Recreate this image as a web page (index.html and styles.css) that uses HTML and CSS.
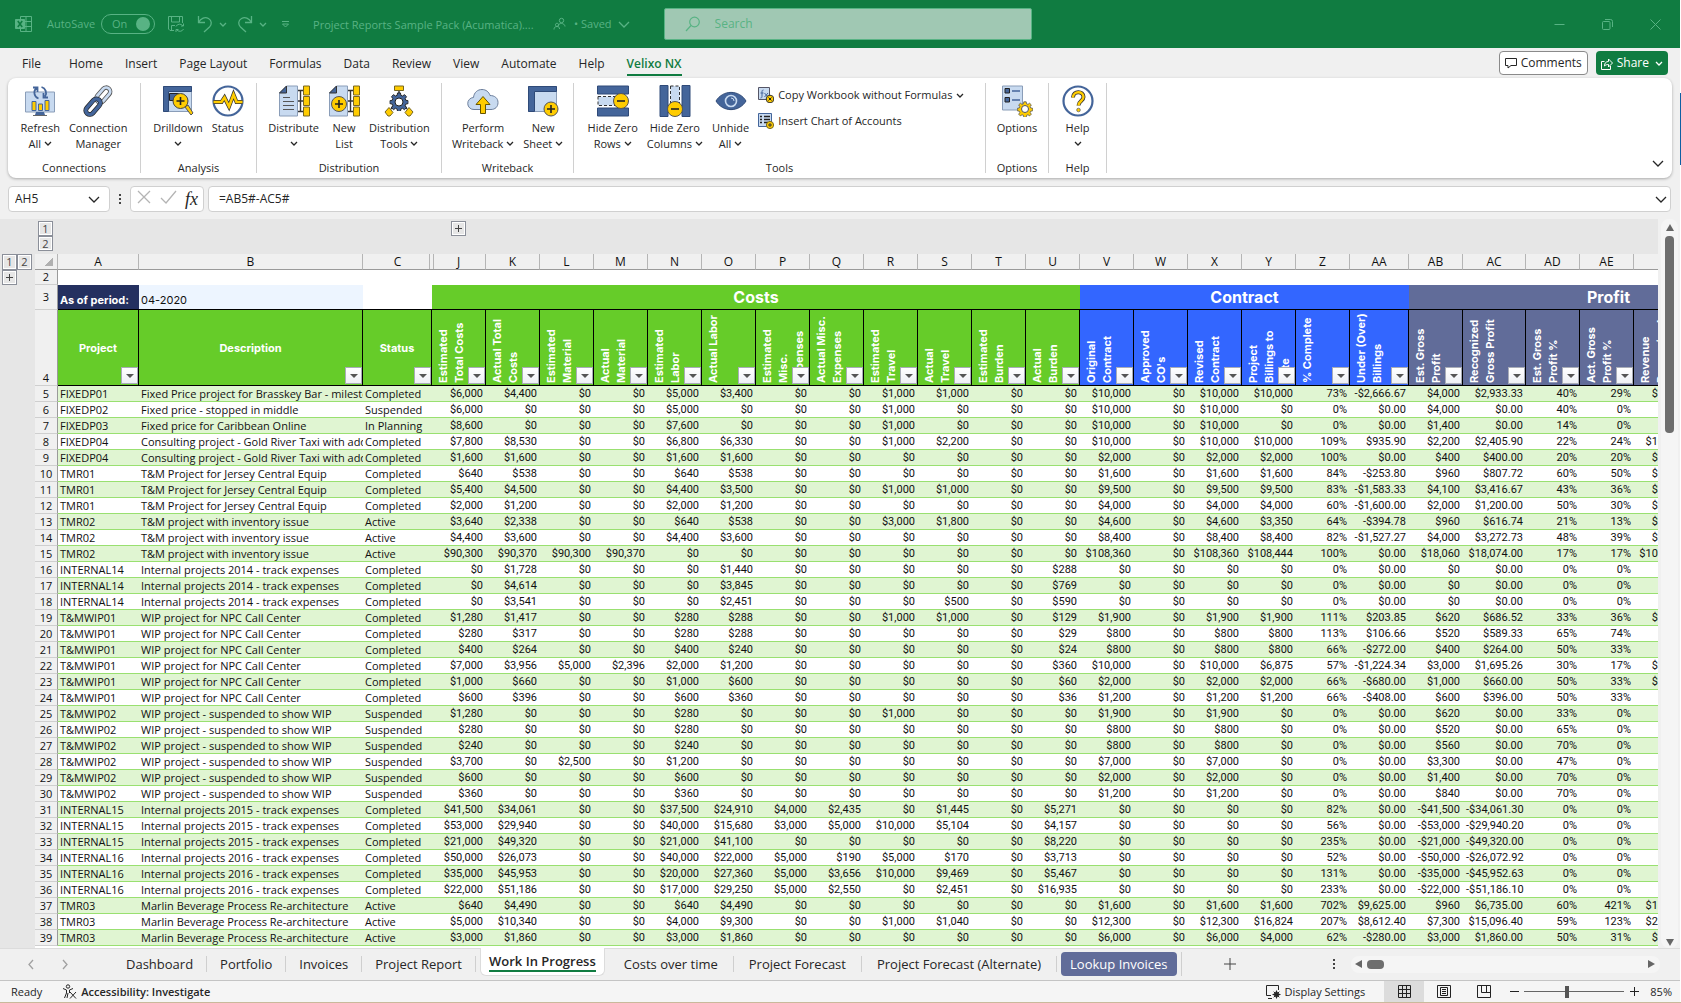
FILE: index.html
```html
<!DOCTYPE html>
<html lang="en">
<head>
    <meta charset="UTF-8">
    <meta name="viewport" content="width=device-width, initial-scale=1.0">
    <title>Project Reports Sample Pack (Acumatica)</title>
    <link rel="stylesheet" href="styles.css">
</head>
<body>

    <!-- shared shapes -->
    <svg class="sprite" aria-hidden="true">
        <symbol id="chev" viewBox="0 0 8 5"><path d="M1 1l3 3 3-3" fill="none" stroke="currentColor" stroke-width="1.3"/></symbol>
        <symbol id="chev-big" viewBox="0 0 12 7"><path d="M1 1l5 5 5-5" fill="none" stroke="currentColor" stroke-width="1.3"/></symbol>
        <symbol id="gear" viewBox="0 0 20 20"><path d="M8.500 1h3l.5 2.500 1.700.7 2.100-1.400 2.100 2.100-1.400 2.100.7 1.700 2.500.5v3l-2.500.5-.7 1.700 1.400 2.100-2.100 2.100-2.100-1.400-1.700.7-.5 2.500h-3l-.5-2.500-1.700-.7-2.100 1.400-2.100-2.100 1.400-2.100-.7-1.700L.3 12.200v-3l2.500-.5.7-1.700-1.400-2.100 2.100-2.100 2.100 1.400 1.700-.7z"/></symbol>
    </svg>

    <header class="titlebar">
        <svg class="excel" width="18" height="18" viewBox="0 0 18 18" fill="none" stroke="currentColor"><path d="M5.500 4V1.500h11v15h-11V14M11 1.500v15M5.500 6.500h11M5.500 11.500h11"/><path d="M.5 4.500h9v9h-9z" fill="currentColor"/><path d="M2.800 6l4.400 6M7.200 6l-4.400 6" stroke="#107c41" stroke-width="1.600"/></svg>
        <label class="autosave" for="autosave">AutoSave</label>
        <span class="toggle">
            <span>On</span>
            <input type="checkbox" id="autosave" checked>
        </span>
        <button class="tb save" aria-label="Save"><svg width="18" height="18" viewBox="0 0 18 18" fill="none" stroke="currentColor"><path d="M7 15.500H3L1.500 14V1.500h14V8M4.500 1.500V7h8V1.500M4.500 15.500V10.500H8"/><path d="M9 11.500a4 4 0 0 1 7-.5M16.500 8.500V11H14M16.500 14a4 4 0 0 1-7 .5M9 17v-2.500h2.500"/></svg></button>
        <button class="tb undo" aria-label="Undo"><svg width="16" height="18" viewBox="0 0 16 18" fill="none" stroke="currentColor" stroke-width="1.300"><path d="M1.500 1v6.500H8M1.500 7.500C4 3 8 1.500 11.500 3.500s3.500 6 1 8.500L7 17"/></svg><svg class="chev"><use href="#chev"/></svg></button>
        <button class="tb redo" aria-label="Redo"><svg width="16" height="18" viewBox="0 0 16 18" fill="none" stroke="currentColor" stroke-width="1.300"><path d="M14.500 1v6.500H8M14.500 7.500C12 3 8 1.500 4.500 3.500s-3.500 6-1 8.500L9 17"/></svg><svg class="chev"><use href="#chev"/></svg></button>
        <button class="tb custom" aria-label="Customize toolbar"><svg width="9" height="8" viewBox="0 0 9 8" fill="none" stroke="currentColor"><path d="M1 1.500h7M1.500 4l3 3 3-3z"/></svg></button>
        <span class="doc">Project Reports Sample Pack (Acumatica)....</span>
        <svg class="people" width="13" height="14" viewBox="0 0 13 14" fill="none" stroke="currentColor"><circle cx="8.500" cy="3.500" r="2.200"/><path d="M5 9.500C5 7 7 6.500 8.500 6.500S12 7.500 12 9.500M4 6.200a1.600 1.600 0 1 0 .1 0M1 12.500c0-2 1-3 3-3s2.500 1 2.500 2.500"/></svg>
        <button class="tb saved">• Saved <svg class="chev-big"><use href="#chev-big"/></svg></button>
        <label class="search">
            <svg width="16" height="16" viewBox="0 0 16 16" fill="none" stroke="currentColor" stroke-width="1.200"><circle cx="9.500" cy="6" r="4.800"/><path d="M6 9.500L1 15"/></svg>
            <input type="search" placeholder="Search" aria-label="Search">
        </label>
        <div class="window">
            <button aria-label="Minimize"><svg width="11" height="11" viewBox="0 0 11 11" stroke="currentColor"><path d="M.5 5.500h10"/></svg></button>
            <button aria-label="Restore"><svg width="11" height="11" viewBox="0 0 11 11" fill="none" stroke="currentColor"><rect x=".5" y="2.500" width="7.500" height="8" rx="1"/><path d="M3 .5h5.500a2 2 0 0 1 2 2V8"/></svg></button>
            <button aria-label="Close"><svg width="11" height="11" viewBox="0 0 11 11" stroke="currentColor"><path d="M.5.5l10 10M10.500.5l-10 10"/></svg></button>
        </div>
    </header>

    <nav class="tabs">
        <a href="#">File</a>
        <a href="#">Home</a>
        <a href="#">Insert</a>
        <a href="#">Page Layout</a>
        <a href="#">Formulas</a>
        <a href="#">Data</a>
        <a href="#">Review</a>
        <a href="#">View</a>
        <a href="#">Automate</a>
        <a href="#">Help</a>
        <a href="#" class="active">Velixo NX</a>
        <button class="comments"><svg width="12" height="12" viewBox="0 0 12 12" fill="none" stroke="currentColor"><path d="M.5 1.500h11v7H6L3 11V8.500H.5z"/></svg>Comments</button>
        <button class="share"><svg width="12" height="13" viewBox="0 0 12 13" fill="none" stroke="currentColor"><path d="M3.500 4.500h-3v8h9V9"/><path d="M3.500 9c0-3 1.500-4.500 4-4.500V2l4 4-4 4V7.500C5.500 7.500 4.500 8 3.500 9z"/></svg>Share<svg class="chev"><use href="#chev"/></svg></button>
    </nav>

    <section class="ribbon">
        <div class="group">
            <div class="tools">
                <button><svg class="ico" viewBox="0 0 32 32"><path d="M1.500 7h29v20h-29z" fill="#c8daf0" stroke="#8a9db8"/><path d="M12 27h8l1 3H11z" fill="#44659a"/><path d="M9 30.500h14" stroke="#666"/><path d="M8 16.500h4v9H8zM14.500 19h4v6.500h-4zM21 15.500h4v10h-4z" fill="#fc0" stroke="#44659a"/><path d="M14.500 13.500a6.200 6.200 0 0 1-2-10.500M9 2.500h4.500V7M17.500 2a6.200 6.200 0 0 1 3.500 9.500M24 12.500h-4.500V8" fill="none" stroke="#44659a" stroke-width="1.800"/></svg>Refresh<br>All <svg class="chev"><use href="#chev"/></svg></button>
                <button><svg class="ico" viewBox="0 0 32 32"><g transform="rotate(-49 16 16)" fill="none"><rect x="15.500" y="12" width="17" height="8" rx="4" stroke="#555" stroke-width="4.400"/><rect x="15.500" y="12" width="17" height="8" rx="4" stroke="#c8daf0" stroke-width="2.800"/><rect x="-.5" y="12" width="18" height="8" rx="4" stroke="#222" stroke-width="4.800"/><rect x="-.5" y="12" width="18" height="8" rx="4" stroke="#44659a" stroke-width="3.400"/></g></svg>Connection<br>Manager</button>
            </div>
            <div class="caption">Connections</div>
        </div>
        <div class="group">
            <div class="tools">
                <button><svg class="ico" viewBox="0 0 32 32"><path d="M1.500 1.500h28v25h-28z" fill="#c8daf0" stroke="#8a9db8"/><path d="M1.500 1.500h28v5h-23v20h-5z" fill="#44659a" stroke="#2f4a78"/><path d="M7.500 8.500h9v7h-9z" fill="#44659a" stroke="#222"/><path d="M23 22l6 8 2-2-5-8z" fill="#fc0" stroke="#555"/><circle cx="18.500" cy="16" r="7.500" fill="#fc0" stroke="#444"/><path d="M18.500 12v8M14.500 16h8" stroke="#222" stroke-width="1.600"/></svg>Drilldown<br><svg class="chev"><use href="#chev"/></svg></button>
                <button><svg class="ico" viewBox="0 0 32 32"><circle cx="16" cy="16" r="14.500" fill="#fff" stroke="#44659a" stroke-width="2.200"/><path d="M1.500 17h8l3-4.500 4.500 9 4.500-12 3 7.500h6" fill="none" stroke="#333" stroke-width="4"/><path d="M1.500 17h8l3-4.500 4.500 9 4.500-12 3 7.500h6" fill="none" stroke="#fc0" stroke-width="2.600"/></svg>Status<br>&nbsp;</button>
            </div>
            <div class="caption">Analysis</div>
        </div>
        <div class="group">
            <div class="tools">
                <button><svg class="ico" viewBox="0 0 32 32"><path d="M1.500 8l7-7h11v30h-18z" fill="#c8daf0" stroke="#8a9db8"/><path d="M1.500 8l7-7v7z" fill="#44659a" stroke="#333"/><path d="M5 12.500h7M5 16.500h11M5 20.500h11M5 24.500h11" stroke="#555"/><path d="M20 5.500h6M20 16h6M20 26.500h6M22.500 5.500v21" stroke="#333" stroke-width="1.400"/><path d="M25.500 1h6v9h-6zM25.500 11.500h6v9h-6zM25.500 22h6v9h-6z" fill="#fc0" stroke="#776620"/></svg>Distribute<br><svg class="chev"><use href="#chev"/></svg></button>
                <button><svg class="ico" viewBox="0 0 32 32"><path d="M1.500 8l7-7h11v30h-18z" fill="#c8daf0" stroke="#8a9db8"/><path d="M1.500 8l7-7v7z" fill="#44659a" stroke="#333"/><path d="M20 5.500h6M20 16h6M20 26.500h6M22.500 5.500v21" stroke="#333" stroke-width="1.400"/><path d="M25.500 1h6v9h-6zM25.500 11.500h6v9h-6zM25.500 22h6v9h-6z" fill="#fc0" stroke="#776620"/><circle cx="11" cy="19" r="7.500" fill="#fc0" stroke="#555"/><path d="M11 15v8M7 19h8" stroke="#222" stroke-width="1.600"/></svg>New<br>List</button>
                <button><svg class="ico" viewBox="0 0 32 32"><path d="M16 5v6M8 24l3-4M24 24l-3-4" stroke="#333" stroke-width="1.400"/><path d="M11.500 1h9v4.500h-9z" fill="#fc0" stroke="#776620"/><use href="#gear" x="6.500" y="7" width="19" height="19" fill="#44659a" stroke="#222"/><circle cx="16" cy="17" r="4" fill="#fff" stroke="#222"/><path d="M6 22.500l4 5-3 3.500H5l-3-4zM26 22.500l-4 5 3 3.500h2l3-4z" fill="#fc0" stroke="#776620"/></svg>Distribution<br>Tools <svg class="chev"><use href="#chev"/></svg></button>
            </div>
            <div class="caption">Distribution</div>
        </div>
        <div class="group">
            <div class="tools">
                <button><svg class="ico" viewBox="0 0 32 32"><path d="M7 24.500a6 6 0 0 1-.5-12c.5-5 4-8 8.500-8 4 0 7 2.500 8 6 4.500 0 8 2.500 8 7s-3 7-7 7z" fill="#c8daf0" stroke="#6d7f9c"/><path d="M16 11.500l7 8h-4.500v9h-5v-9H9z" fill="#fc0" stroke="#665500"/></svg>Perform<br>Writeback <svg class="chev"><use href="#chev"/></svg></button>
                <button><svg class="ico" viewBox="0 0 32 32"><path d="M1.500 1.500h28v25h-28z" fill="#c8daf0" stroke="#8a9db8"/><path d="M1.500 1.500h28v5h-22v20h-6z" fill="#44659a" stroke="#2f4a78"/><circle cx="24" cy="24" r="7" fill="#fc0" stroke="#555"/><path d="M24 20v8M20 24h8" stroke="#222" stroke-width="1.600"/></svg>New<br>Sheet <svg class="chev"><use href="#chev"/></svg></button>
            </div>
            <div class="caption">Writeback</div>
        </div>
        <div class="group">
            <div class="tools">
                <button><svg class="ico" viewBox="0 0 32 32"><path d="M.5 1h31v8h-31zM.5 23h31v8h-31z" fill="#44659a" stroke="#2f4a78"/><path d="M1 11.500h20v9H1z" fill="#c8daf0" stroke="#333" stroke-dasharray="3 2"/><circle cx="24" cy="16" r="7.500" fill="#fc0" stroke="#555"/><path d="M20 16h8" stroke="#222" stroke-width="1.600"/></svg>Hide Zero<br>Rows <svg class="chev"><use href="#chev"/></svg></button>
                <button><svg class="ico" viewBox="0 0 32 32"><path d="M1 .5h8v31H1zM23 .5h8v31h-8z" fill="#44659a" stroke="#2f4a78"/><path d="M11.500 1h9v20h-9z" fill="#c8daf0" stroke="#333" stroke-dasharray="3 2"/><circle cx="16" cy="24" r="7.500" fill="#fc0" stroke="#555"/><path d="M12 24h8" stroke="#222" stroke-width="1.600"/></svg>Hide Zero<br>Columns <svg class="chev"><use href="#chev"/></svg></button>
                <button><svg class="ico" viewBox="0 0 32 32"><path d="M1 16C8 4.500 24 4.500 31 16 24 27.500 8 27.500 1 16z" fill="#44659a" stroke="#2f4a78"/><circle cx="16" cy="16" r="5.500" fill="none" stroke="#c8daf0" stroke-width="1.600"/><path d="M16 13a3 3 0 0 1 3 3" fill="none" stroke="#c8daf0"/></svg>Unhide<br>All <svg class="chev"><use href="#chev"/></svg></button>
                <div class="list">
                    <button><svg width="16" height="16" viewBox="0 0 16 16"><path d="M.5.5h11v12H.5z" fill="#c8daf0" stroke="#556"/><path d="M5.500 3C4 3 4 4 4 5v4c0 1 0 2-1.500 2M2.500 6h3M6.500 6l3.500 4M10 6l-3.500 4" fill="none" stroke="#44659a"/><circle cx="12" cy="12" r="3.800" fill="#fc0" stroke="#333"/><path d="M10.500 10.500l3 3M13.500 10.500l-3 3" stroke="#222"/></svg>Copy Workbook without Formulas <svg class="chev"><use href="#chev"/></svg></button>
                    <button><svg width="16" height="16" viewBox="0 0 16 16"><path d="M.5.5h13v13H.5z" fill="#c8daf0" stroke="#44659a"/><path d="M2 3.500h2M6 3.500h6M2 6.500h2M6 6.500h6M2 9.500h2M6 9.500h4" stroke="#222" stroke-width="1.400"/><circle cx="12" cy="12" r="3.600" fill="#fc0" stroke="#776620"/><path d="M12 10v4M10 12h4" stroke="#333"/></svg>Insert Chart of Accounts</button>
                </div>
            </div>
            <div class="caption">Tools</div>
        </div>
        <div class="group">
            <div class="tools">
                <button><svg class="ico" viewBox="0 0 32 32"><path d="M1.500 1h20v24h-20z" fill="#c8daf0" stroke="#8a9db8"/><path d="M4 3.500h4.500V8H4zM4 12.500h4.500V17H4z" fill="#44659a" stroke="#222"/><path d="M11 6h8M11 15h8" stroke="#44659a" stroke-width="1.400"/><use href="#gear" x="16" y="16" width="16" height="16" fill="#fc0" stroke="#555"/><circle cx="24" cy="24" r="3.500" fill="#fff" stroke="#555"/></svg>Options<br>&nbsp;</button>
            </div>
            <div class="caption">Options</div>
        </div>
        <div class="group">
            <div class="tools">
                <button><svg class="ico" viewBox="0 0 32 32"><circle cx="16" cy="16" r="14.500" fill="#fff" stroke="#44659a" stroke-width="2.200"/><path d="M11 12.500c0-7 10.500-7 10.500-.5 0 4-5 4-5 8.500" fill="none" stroke="#333" stroke-width="4"/><path d="M11 12.500c0-7 10.500-7 10.500-.5 0 4-5 4-5 8.500" fill="none" stroke="#fc0" stroke-width="2.400"/><circle cx="16.500" cy="25" r="1.800" fill="#fc0" stroke="#555" stroke-width=".7"/></svg>Help<br><svg class="chev"><use href="#chev"/></svg></button>
            </div>
            <div class="caption">Help</div>
        </div>
        <button class="collapse" aria-label="Collapse ribbon"><svg class="chev-big"><use href="#chev-big"/></svg></button>
    </section>

    <section class="formula">
        <div class="namebox">
            <input type="text" value="AH5" aria-label="Name box">
            <button aria-label="Names"><svg class="chev-big"><use href="#chev-big"/></svg></button>
        </div>
        <span class="dots"></span>
        <div class="fxbox">
            <button aria-label="Cancel"><svg width="14" height="14" viewBox="0 0 14 14" stroke="#b4b4b4" stroke-width="1.300"><path d="M1 1l12 12M13 1L1 13"/></svg></button>
            <button aria-label="Enter"><svg width="17" height="14" viewBox="0 0 17 14" fill="none" stroke="#b4b4b4" stroke-width="1.300"><path d="M1 8l5 5L16 1"/></svg></button>
            <button class="fx" aria-label="Insert function">fx</button>
        </div>
        <div class="formulabox">
            <input type="text" value="=AB5#-AC5#" aria-label="Formula bar">
            <button aria-label="Expand formula bar"><svg class="chev-big"><use href="#chev-big"/></svg></button>
        </div>
    </section>

    <main class="workbook">
        <div class="sheet">
            <div class="outline-top">
                <div class="levels"><button class="lvl">1</button><button class="lvl">2</button></div>
                <button class="lvl plus" aria-label="Expand columns"></button>
            </div>
            <div class="outline-left">
                <div class="levels-row"><button class="lvl">1</button><button class="lvl">2</button></div>
                <button class="lvl plus" aria-label="Expand rows"></button>
            </div>
            <div class="gridwrap">
                <table>
                    <colgroup id="cols"></colgroup>
                    <thead>
                        <tr class="letters" id="letters"></tr>
                        <tr class="r2"><th class="rh">2</th><td colspan="28"></td></tr>
                        <tr class="r3">
                            <th class="rh">3</th>
                            <th class="period">As of period:</th>
                            <td class="period-value">04-2020</td>
                            <td></td>
                            <th class="green" colspan="12">Costs</th>
                            <th class="blue" colspan="6">Contract</th>
                            <th class="slate" colspan="7">Profit</th>
                        </tr>
                        <tr class="r4" id="heads"></tr>
                    </thead>
                    <tbody id="rows"></tbody>
                </table>
            </div>
        </div>
        <div class="vscroll">
            <button class="up" aria-label="Scroll up"></button>
            <div class="thumb"></div>
            <button class="down" aria-label="Scroll down"></button>
        </div>
    </main>

    <nav class="sheets">
        <button class="nav" aria-label="Previous sheet"><svg width="6" height="11" viewBox="0 0 6 11" fill="none" stroke="#a0a0a0" stroke-width="1.300"><path d="M5 1L1 5.500 5 10"/></svg></button>
        <button class="nav" aria-label="Next sheet"><svg width="6" height="11" viewBox="0 0 6 11" fill="none" stroke="#a0a0a0" stroke-width="1.300"><path d="M1 1l4 4.500L1 10"/></svg></button>
        <div class="sheetlist">
            <a href="#">Dashboard</a>
            <a href="#">Portfolio</a>
            <a href="#">Invoices</a>
            <a href="#">Project Report</a>
            <a href="#" class="current"><span>Work In Progress</span></a>
            <a href="#">Costs over time</a>
            <a href="#">Project Forecast</a>
            <a href="#">Project Forecast (Alternate)</a>
            <a href="#" class="chip"><span>Lookup Invoices</span></a>
        </div>
        <button class="add" aria-label="New sheet"><svg width="12" height="12" viewBox="0 0 12 12" stroke="#444"><path d="M6 0v12M0 6h12"/></svg></button>
        <span class="dots"></span>
        <div class="hscroll">
            <button class="left" aria-label="Scroll left"></button>
            <div class="thumb"></div>
            <button class="right" aria-label="Scroll right"></button>
        </div>
    </nav>

    <footer class="status">
        <span>Ready</span>
        <button class="access"><svg width="15" height="15" viewBox="0 0 15 15" fill="none" stroke="currentColor"><circle cx="6" cy="2.500" r="1.700"/><path d="M1 4.500l3.500 1.500v3L2.500 14M11 4.500L7.500 6v3M6 9l-1 5M8 8l6 6.500M14 8L8 14.500"/></svg>Accessibility: Investigate</button>
        <button class="display"><svg width="15" height="14" viewBox="0 0 15 14" fill="none" stroke="currentColor"><path d="M5 10.500H.5V.5h12V5M2 13.500h4"/><circle cx="10.500" cy="9.500" r="2.500"/><path d="M10.500 5.500v8M6.500 9.500h8M7.700 6.700l5.600 5.600M13.300 6.700l-5.600 5.600"/></svg>Display Settings</button>
        <button class="view on" aria-label="Normal view"><svg width="13" height="13" viewBox="0 0 13 13" fill="none" stroke="#222"><path d="M.5.5h12v12H.5zM4.500.5v12M8.500.5v12M.5 4.500h12M.5 8.500h12"/></svg></button>
        <button class="view" aria-label="Page layout view"><svg width="14" height="13" viewBox="0 0 14 13" fill="none" stroke="#222"><path d="M.5.5h13v12H.5zM3.500 2.500h7v8h-7zM5 4.500h4M5 6.500h4M5 8.500h4"/></svg></button>
        <button class="view" aria-label="Page break view"><svg width="14" height="13" viewBox="0 0 14 13" fill="none" stroke="#222"><path d="M.5.5h13v12H.5zM4.500.5v7h9M9.500.5v7"/></svg></button>
        <button class="zoom" aria-label="Zoom out"><svg width="9" height="9" viewBox="0 0 9 9" stroke="#222"><path d="M0 4.500h9"/></svg></button>
        <input type="range" min="10" max="200" value="90" aria-label="Zoom">
        <button class="zoom" aria-label="Zoom in"><svg width="9" height="9" viewBox="0 0 9 9" stroke="#222"><path d="M0 4.500h9M4.500 0v9"/></svg></button>
        <span class="percent">85%</span>
    </footer>

    <script src="script.js"></script>
</body>
</html>
```
FILE: styles.css
```css
* {
    box-sizing: border-box;
}

body {
    margin: 0;
    height: 100vh;
    display: flex;
    flex-direction: column;
    overflow: hidden;
    padding-right: 1px;
    background: linear-gradient(#fff 93px, #0e5fa3 93px 165px, #fff 165px) right top / 1px 100% no-repeat #f0f0f0;
    border-bottom: 1px solid #c9b99b;
    color: #262626;
    font: 11px/16px "Open Sans", "Noto Sans", sans-serif;
}

button, input {
    font: inherit;
    color: inherit;
    border: 0;
    padding: 0;
    margin: 0;
    background: none;
    outline: none;
    min-width: 0;
}

a {
    color: inherit;
    text-decoration: none;
}

svg {
    flex: none;
}

.sprite {
    display: none;
}

.chev {
    width: 8px;
    height: 5px;
    vertical-align: 2px;
}

.chev-big {
    width: 12px;
    height: 7px;
}

/* title bar */
.titlebar {
    display: flex;
    align-items: center;
    height: 48px;
    flex: none;
    padding-left: 15px;
    background-color: #107c41;
    color: #58b384;
}

.titlebar .tb {
    display: flex;
    align-items: center;
    gap: 6px;
}

.autosave {
    margin-left: 14px;
}

.toggle {
    display: flex;
    align-items: center;
    justify-content: space-between;
    width: 54px;
    height: 20px;
    margin-left: 6px;
    padding: 0 4px 0 10px;
    border: 1px solid #58b384;
    border-radius: 10px;
}

.toggle input {
    appearance: none;
    width: 14px;
    height: 14px;
    border-radius: 50%;
    background-color: #58b384;
}

.titlebar .save {
    margin-left: 12px;
}

.titlebar .undo {
    margin-left: 12px;
}

.titlebar .redo {
    margin-left: 10px;
}

.titlebar .custom {
    margin: 0 23px 0 14px;
}

.doc {
    width: 240px;
    padding-top: 2px;
    white-space: nowrap;
}

.titlebar .saved {
    margin-left: 8px;
}

.search {
    display: flex;
    align-items: center;
    gap: 14px;
    width: 368px;
    height: 32px;
    margin-left: 34px;
    padding-left: 20px;
    border: 1px solid #58b384;
    border-radius: 2px;
    background-color: #a0c8b3;
}

.search input {
    flex: 1;
    font-size: 12px;
}

.search input::placeholder {
    color: #58b384;
}

.window {
    display: flex;
    gap: 37px;
    margin-left: auto;
    padding-right: 19px;
}

.window button {
    display: flex;
}

/* ribbon tabs */
.tabs {
    display: flex;
    align-items: center;
    gap: 22px;
    height: 30px;
    flex: none;
    padding: 0 12px 0 22px;
    font-size: 12px;
}

.tabs a {
    padding: 5px 0 2px;
    border-bottom: 2px solid transparent;
}

.tabs a:first-child {
    margin-right: 6px;
}

.tabs .active {
    color: #107c41;
    font-weight: 600;
    border-bottom-color: #107c41;
}

.tabs button {
    display: flex;
    align-items: center;
    gap: 4px;
    height: 24px;
    padding: 0 5px;
    border-radius: 4px;
}

.tabs .comments {
    margin-left: auto;
    border: 1px solid #8a8a8a;
    background-color: #fff;
}

.tabs .share {
    margin-left: -14px;
    background-color: #107c41;
    color: #fff;
}

.share .chev {
    margin-left: 2px;
}

/* ribbon */
.ribbon {
    display: grid;
    grid-template-columns: 133px 116px 185px 132px 412px 63px 58px 1fr;
    height: 100px;
    flex: none;
    margin: 0 8px 0 8px;
    padding: 5px 0;
    border-radius: 8px;
    background-color: #fff;
    box-shadow: 0 1px 3px rgba(0, 0, 0, 0.3);
}

.group {
    display: flex;
    flex-direction: column;
    justify-content: space-between;
    border-right: 1px solid #d0d0d0;
    text-align: center;
}

.tools {
    display: flex;
    justify-content: center;
    align-items: flex-start;
    gap: 1px;
    padding-top: 2px;
}

.tools > button {
    padding: 0 4px;
    white-space: nowrap;
}

.ico {
    display: block;
    width: 32px;
    height: 32px;
    margin: 0 auto 3px;
}

.list {
    display: flex;
    flex-direction: column;
    gap: 10px;
    margin: 2px 11px 0 4px;
}

.list button {
    display: flex;
    align-items: center;
    gap: 4px;
}

.caption {
    line-height: 10px;
}

.collapse {
    justify-self: end;
    align-self: end;
    margin: 0 8px 2px 0;
}

/* formula bar */
.formula {
    display: flex;
    align-items: center;
    height: 26px;
    flex: none;
    margin: 8px 9px 7px 8px;
    font-size: 12px;
}

.namebox, .fxbox, .formulabox {
    display: flex;
    align-items: center;
    height: 26px;
    padding: 0 9px 0 6px;
    border: 1px solid #d0d0d0;
    border-radius: 4px;
    background-color: #fff;
}

.namebox {
    width: 102px;
}

.namebox input, .formulabox input {
    flex: 1;
}

.dots {
    width: 2px;
    height: 10px;
    background: repeating-linear-gradient(#444 0 2px, transparent 2px 4px);
}

.formula .dots {
    margin: 0 9px;
}

.fxbox {
    justify-content: space-between;
    width: 74px;
    padding: 0 5px 0 6px;
}

.fxbox .fx {
    font: italic 18px/20px "Liberation Serif", serif;
}

.formulabox {
    flex: 1;
    margin-left: 4px;
    padding: 0 3px 0 10px;
}

/* worksheet */
.workbook {
    display: flex;
    flex: 1;
    min-height: 0;
}

.sheet {
    display: grid;
    grid-template: 35px 1fr / 35px 1fr;
    flex: 1;
    min-width: 0;
    background-color: #e6e6e6;
    overflow: hidden;
}

.outline-top {
    grid-column: 1 / 3;
    display: flex;
    align-items: flex-start;
    gap: 398px;
    padding: 2px 0 0 38px;
}

.levels {
    display: flex;
    flex-direction: column;
}

.levels-row {
    display: flex;
}

.outline-left {
    padding-left: 2px;
}

.lvl {
    display: block;
    width: 15px;
    height: 15px;
    border: 1px solid #8b8f99;
    box-shadow: inset 0 0 0 1px #fff;
    color: #444;
    line-height: 12px;
}

.levels-row .lvl {
    height: 16px;
}

.plus {
    background:
        linear-gradient(#444, #444) center / 7px 1px no-repeat,
        linear-gradient(#444, #444) center / 1px 7px no-repeat;
}

.gridwrap {
    overflow: hidden;
    background-color: #fff;
}

table {
    width: 1743px;
    table-layout: fixed;
    border-collapse: separate;
    border-spacing: 0;
    font: 11px/14px Inter, sans-serif;
    color: #111;
}

th, td {
    padding: 0 3px;
    white-space: nowrap;
    overflow: hidden;
}

.letters th {
    height: 16px;
    border-right: 1px solid #b5b5b5;
    border-bottom: 1px solid #9a9a9a;
    background-color: #f0f0f0;
    font: 12px/14px "Open Sans", sans-serif;
}

/* columns D to I are folded away between these two */
.letters .fold {
    border-right: 0;
    background: linear-gradient(#b5b5b5, #b5b5b5) right 2px top / 1px 100% no-repeat #f0f0f0;
}

.letters .unfold {
    background: linear-gradient(#b5b5b5, #b5b5b5) 1px 0 / 1px 100% no-repeat #f0f0f0;
}

.letters .corner {
    background: linear-gradient(135deg, transparent 50%, #b0b0b0 50%) right 4px bottom 3px / 8px 8px no-repeat #f0f0f0;
}

.rh {
    padding: 0;
    border-right: 1px solid #9a9a9a;
    border-bottom: 1px solid #cfcfcf;
    background-color: #f0f0f0;
    font: 11px/14px "Open Sans", sans-serif;
}

.r2 > * {
    height: 15px;
}

.r3 > * {
    height: 25px;
    border-bottom: 1px solid #000;
    font-size: 16px;
}

.r3 .rh {
    font-size: 11px;
    border-bottom-color: #cfcfcf;
}

.r3 .period, .r3 .period-value {
    padding: 0 0 2px 2px;
    vertical-align: bottom;
    text-align: left;
    font-size: 11px;
}

.r3 .period {
    background-color: #243060;
    color: #fff;
}

.period-value {
    background-color: #edf5ff;
}

.green, .blue, .slate {
    color: #fff;
}

.green {
    background-color: #66cc29;
}

.blue {
    background-color: #3366ff;
}

.slate {
    background-color: #616c99;
}

.r4 th {
    position: relative;
    height: 76px;
    border-right: 1px solid #000;
    border-bottom: 1px solid #000;
}

.r4 .rh {
    vertical-align: bottom;
    border-color: #9a9a9a;
    border-bottom-color: #cfcfcf;
}

.r4 .up {
    padding: 0 0 0 3px;
}

.up > span {
    display: block;
    height: 70px;
    writing-mode: vertical-rl;
    transform: rotate(180deg);
    text-align: left;
    line-height: 16px;
}

.filter {
    position: absolute;
    right: 0;
    bottom: 1px;
    width: 17px;
    height: 17px;
    border: 1px solid #a9adb8;
    background: linear-gradient(#fff, #eef0f5);
}

.filter::after {
    content: "";
    display: block;
    margin: 1px auto 0;
    width: 0;
    border: 4px solid transparent;
    border-top-color: #555;
    border-bottom: 0;
}

tbody td {
    height: 16px;
    border-bottom: 1px solid #99e070;
    font-family: Roboto, sans-serif;
    text-align: right;
}

tbody td.text {
    font-family: "Open Sans", sans-serif;
    text-align: left;
    padding: 0 0 0 2px;
}

tbody tr:nth-child(odd) td {
    background-color: #e0f5d2;
}

.vscroll {
    display: flex;
    flex-direction: column;
    align-items: center;
    width: 17px;
    margin: 0 2px 0 3px;
    border-radius: 8px;
    background-color: #f5f5f5;
}

.vscroll .up, .vscroll .down, .hscroll .left, .hscroll .right {
    border: 4px solid transparent;
}

.vscroll .up {
    margin: 5px 0 5px;
    border-top-width: 0;
    border-bottom: 7px solid #666;
}

.vscroll .down {
    margin: auto 0 2px;
    border-bottom-width: 0;
    border-top: 7px solid #666;
}

.vscroll .thumb {
    width: 9px;
    height: 27%;
    border-radius: 4px;
    background-color: #6e6e6e;
}

/* sheet tabs */
.sheets {
    display: flex;
    align-items: center;
    height: 32px;
    flex: none;
    padding-bottom: 1px;
    border-top: 1px solid #dcdcdc;
    font-size: 13px;
}

.nav {
    display: flex;
    margin-left: 28px;
}

.sheetlist {
    display: flex;
    align-items: center;
    align-self: stretch;
    margin-left: 45px;
}

.sheetlist a {
    padding: 0 13px;
    border-right: 1px solid #cfcfcf;
    white-space: nowrap;
}

.sheetlist .current ~ a {
    padding: 0 15px;
}

.sheetlist .current {
    align-self: flex-start;
    height: 28px;
    margin: -1px 4px 0;
    padding: 5px 8px;
    border: 1px solid #dcdcdc;
    border-top: 0;
    border-radius: 0 0 6px 6px;
    background-color: #fff;
    font-weight: 600;
}

.current span {
    display: block;
    height: 19px;
    border-bottom: 2px solid #107c41;
}

.sheetlist .current ~ .chip {
    padding: 0 4px;
}

.chip span {
    display: block;
    padding: 4px 9px;
    border-radius: 4px;
    background-color: #616c99;
    color: #fff;
}

.add {
    display: flex;
    margin-left: 42px;
}

.sheets .dots {
    margin-left: auto;
}

.hscroll {
    display: flex;
    align-items: center;
    width: 309px;
    height: 17px;
    margin: 0 20px 0 16px;
    border-radius: 8px;
    background-color: #f5f5f5;
}

.hscroll .left {
    margin: 0 5px 0 4px;
    border-left-width: 0;
    border-right: 7px solid #666;
}

.hscroll .right {
    margin: 0 5px 0 auto;
    border-right-width: 0;
    border-left: 7px solid #666;
}

.hscroll .thumb {
    width: 17px;
    height: 9px;
    border-radius: 4px;
    background-color: #6e6e6e;
}

/* status bar */
.status {
    display: flex;
    align-items: center;
    height: 22px;
    flex: none;
    padding: 0 8px 0 11px;
    border-top: 1px solid #c4c4c4;
    background-color: #f5f5f5;
}

.status button {
    display: flex;
    align-items: center;
    justify-content: center;
    gap: 4px;
    height: 21px;
}

.access {
    margin-left: 20px;
    font-weight: 600;
}

.display {
    margin: 0 19px 0 auto;
}

.view {
    width: 40px;
}

.view.on {
    background-color: #dcdcdc;
}

.zoom {
    width: 9px;
    margin-left: 6px;
}

.status input {
    appearance: none;
    width: 100px;
    height: 12px;
    margin-left: 5px;
    background: linear-gradient(#666, #666) center / 100% 1px no-repeat;
}

.status input::-webkit-slider-thumb {
    appearance: none;
    width: 4px;
    height: 12px;
    background-color: #555;
}

.percent {
    margin-left: 11px;
}
```
FILE: script.js
```js
// letter, width, colour, heading
const columns = [
    ["A", 81, "green", "Project"],
    ["B", 224, "green", "Description"],
    ["C", 69, "green", "Status"],
    ["J", 54, "green", "Estimated<br>Total Costs"],
    ["K", 54, "green", "Actual Total<br>Costs"],
    ["L", 54, "green", "Estimated<br>Material"],
    ["M", 54, "green", "Actual<br>Material"],
    ["N", 54, "green", "Estimated<br>Labor"],
    ["O", 54, "green", "Actual Labor"],
    ["P", 54, "green", "Estimated<br>Misc.<br>Expenses"],
    ["Q", 54, "green", "Actual Misc.<br>Expenses"],
    ["R", 54, "green", "Estimated<br>Travel"],
    ["S", 54, "green", "Actual<br>Travel"],
    ["T", 54, "green", "Estimated<br>Burden"],
    ["U", 54, "green", "Actual<br>Burden"],
    ["V", 54, "blue", "Original<br>Contract"],
    ["W", 54, "blue", "Approved<br>CO's"],
    ["X", 54, "blue", "Revised<br>Contract"],
    ["Y", 54, "blue", "Project<br>Billings to<br>Date"],
    ["Z", 54, "blue", "% Complete"],
    ["AA", 59, "blue", "Under (Over)<br>Billings"],
    ["AB", 54, "slate", "Est. Gross<br>Profit"],
    ["AC", 63, "slate", "Recognized<br>Gross Profit"],
    ["AD", 54, "slate", "Est. Gross<br>Profit %"],
    ["AE", 54, "slate", "Act. Gross<br>Profit %"],
    ["AF", 69, "slate", "Revenue<br>Recognized"],
    ["", 60, "slate", ""],
    ["", 45, "slate", ""]
];

const brasskey = "Fixed Price project for Brasskey Bar - milestones";
const taxi = "Consulting project - Gold River Taxi with additional";
const jersey = "T&M Project for Jersey Central Equip";
const inventory = "T&M project with inventory issue";
const npc = "WIP project for NPC Call Center";
const wip = "WIP project - suspended to show WIP";
const marlin = "Marlin Beverage Process Re-architecture";
const internal = year => `Internal projects ${year} - track expenses`;

// project, description, status, then J..AF in order
const data = [
    ["FIXEDP01", brasskey, "Completed", "$6,000 $4,400 $0 $0 $5,000 $3,400 $0 $0 $1,000 $1,000 $0 $0 $10,000 $0 $10,000 $10,000 73% -$2,666.67 $4,000 $2,933.33 40% 29% $7,333.33"],
    ["FIXEDP02", "Fixed price - stopped in middle", "Suspended", "$6,000 $0 $0 $0 $5,000 $0 $0 $0 $1,000 $0 $0 $0 $10,000 $0 $10,000 $0 0% $0.00 $4,000 $0.00 40% 0% $0.00"],
    ["FIXEDP03", "Fixed price for Caribbean Online", "In Planning", "$8,600 $0 $0 $0 $7,600 $0 $0 $0 $1,000 $0 $0 $0 $10,000 $0 $10,000 $0 0% $0.00 $1,400 $0.00 14% 0% $0.00"],
    ["FIXEDP04", taxi, "Completed", "$7,800 $8,530 $0 $0 $6,800 $6,330 $0 $0 $1,000 $2,200 $0 $0 $10,000 $0 $10,000 $10,000 109% $935.90 $2,200 $2,405.90 22% 24% $10,935.90"],
    ["FIXEDP04", taxi, "Completed", "$1,600 $1,600 $0 $0 $1,600 $1,600 $0 $0 $0 $0 $0 $0 $2,000 $0 $2,000 $2,000 100% $0.00 $400 $400.00 20% 20% $2,000.00"],
    ["TMR01", jersey, "Completed", "$640 $538 $0 $0 $640 $538 $0 $0 $0 $0 $0 $0 $1,600 $0 $1,600 $1,600 84% -$253.80 $960 $807.72 60% 50% $1,346.20"],
    ["TMR01", jersey, "Completed", "$5,400 $4,500 $0 $0 $4,400 $3,500 $0 $0 $1,000 $1,000 $0 $0 $9,500 $0 $9,500 $9,500 83% -$1,583.33 $4,100 $3,416.67 43% 36% $7,916.67"],
    ["TMR01", jersey, "Completed", "$2,000 $1,200 $0 $0 $2,000 $1,200 $0 $0 $0 $0 $0 $0 $4,000 $0 $4,000 $4,000 60% -$1,600.00 $2,000 $1,200.00 50% 30% $2,400.00"],
    ["TMR02", inventory, "Active", "$3,640 $2,338 $0 $0 $640 $538 $0 $0 $3,000 $1,800 $0 $0 $4,600 $0 $4,600 $3,350 64% -$394.78 $960 $616.74 21% 13% $2,955.22"],
    ["TMR02", inventory, "Active", "$4,400 $3,600 $0 $0 $4,400 $3,600 $0 $0 $0 $0 $0 $0 $8,400 $0 $8,400 $8,400 82% -$1,527.27 $4,000 $3,272.73 48% 39% $6,872.73"],
    ["TMR02", inventory, "Active", "$90,300 $90,370 $90,300 $90,370 $0 $0 $0 $0 $0 $0 $0 $0 $108,360 $0 $108,360 $108,444 100% $0.00 $18,060 $18,074.00 17% 17% $108,444.00"],
    ["INTERNAL14", internal(2014), "Completed", "$0 $1,728 $0 $0 $0 $1,440 $0 $0 $0 $0 $0 $288 $0 $0 $0 $0 0% $0.00 $0 $0.00 0% 0% $0.00"],
    ["INTERNAL14", internal(2014), "Completed", "$0 $4,614 $0 $0 $0 $3,845 $0 $0 $0 $0 $0 $769 $0 $0 $0 $0 0% $0.00 $0 $0.00 0% 0% $0.00"],
    ["INTERNAL14", internal(2014), "Completed", "$0 $3,541 $0 $0 $0 $2,451 $0 $0 $0 $500 $0 $590 $0 $0 $0 $0 0% $0.00 $0 $0.00 0% 0% $0.00"],
    ["T&MWIP01", npc, "Completed", "$1,280 $1,417 $0 $0 $280 $288 $0 $0 $1,000 $1,000 $0 $129 $1,900 $0 $1,900 $1,900 111% $203.85 $620 $686.52 33% 36% $2,103.85"],
    ["T&MWIP01", npc, "Completed", "$280 $317 $0 $0 $280 $288 $0 $0 $0 $0 $0 $29 $800 $0 $800 $800 113% $106.66 $520 $589.33 65% 74% $906.66"],
    ["T&MWIP01", npc, "Completed", "$400 $264 $0 $0 $400 $240 $0 $0 $0 $0 $0 $24 $800 $0 $800 $800 66% -$272.00 $400 $264.00 50% 33% $528.00"],
    ["T&MWIP01", npc, "Completed", "$7,000 $3,956 $5,000 $2,396 $2,000 $1,200 $0 $0 $0 $0 $0 $360 $10,000 $0 $10,000 $6,875 57% -$1,224.34 $3,000 $1,695.26 30% 17% $5,650.66"],
    ["T&MWIP01", npc, "Completed", "$1,000 $660 $0 $0 $1,000 $600 $0 $0 $0 $0 $0 $60 $2,000 $0 $2,000 $2,000 66% -$680.00 $1,000 $660.00 50% 33% $1,320.00"],
    ["T&MWIP01", npc, "Completed", "$600 $396 $0 $0 $600 $360 $0 $0 $0 $0 $0 $36 $1,200 $0 $1,200 $1,200 66% -$408.00 $600 $396.00 50% 33% $792.00"],
    ["T&MWIP02", wip, "Suspended", "$1,280 $0 $0 $0 $280 $0 $0 $0 $1,000 $0 $0 $0 $1,900 $0 $1,900 $0 0% $0.00 $620 $0.00 33% 0% $0.00"],
    ["T&MWIP02", wip, "Suspended", "$280 $0 $0 $0 $280 $0 $0 $0 $0 $0 $0 $0 $800 $0 $800 $0 0% $0.00 $520 $0.00 65% 0% $0.00"],
    ["T&MWIP02", wip, "Suspended", "$240 $0 $0 $0 $240 $0 $0 $0 $0 $0 $0 $0 $800 $0 $800 $0 0% $0.00 $560 $0.00 70% 0% $0.00"],
    ["T&MWIP02", wip, "Suspended", "$3,700 $0 $2,500 $0 $1,200 $0 $0 $0 $0 $0 $0 $0 $7,000 $0 $7,000 $0 0% $0.00 $3,300 $0.00 47% 0% $0.00"],
    ["T&MWIP02", wip, "Suspended", "$600 $0 $0 $0 $600 $0 $0 $0 $0 $0 $0 $0 $2,000 $0 $2,000 $0 0% $0.00 $1,400 $0.00 70% 0% $0.00"],
    ["T&MWIP02", wip, "Suspended", "$360 $0 $0 $0 $360 $0 $0 $0 $0 $0 $0 $0 $1,200 $0 $1,200 $0 0% $0.00 $840 $0.00 70% 0% $0.00"],
    ["INTERNAL15", internal(2015), "Completed", "$41,500 $34,061 $0 $0 $37,500 $24,910 $4,000 $2,435 $0 $1,445 $0 $5,271 $0 $0 $0 $0 82% $0.00 -$41,500 -$34,061.30 0% 0% $0.00"],
    ["INTERNAL15", internal(2015), "Completed", "$53,000 $29,940 $0 $0 $40,000 $15,680 $3,000 $5,000 $10,000 $5,104 $0 $4,157 $0 $0 $0 $0 56% $0.00 -$53,000 -$29,940.20 0% 0% $0.00"],
    ["INTERNAL15", internal(2015), "Completed", "$21,000 $49,320 $0 $0 $21,000 $41,100 $0 $0 $0 $0 $0 $8,220 $0 $0 $0 $0 235% $0.00 -$21,000 -$49,320.00 0% 0% $0.00"],
    ["INTERNAL16", internal(2016), "Completed", "$50,000 $26,073 $0 $0 $40,000 $22,000 $5,000 $190 $5,000 $170 $0 $3,713 $0 $0 $0 $0 52% $0.00 -$50,000 -$26,072.92 0% 0% $0.00"],
    ["INTERNAL16", internal(2016), "Completed", "$35,000 $45,953 $0 $0 $20,000 $27,360 $5,000 $3,656 $10,000 $9,469 $0 $5,467 $0 $0 $0 $0 131% $0.00 -$35,000 -$45,952.63 0% 0% $0.00"],
    ["INTERNAL16", internal(2016), "Completed", "$22,000 $51,186 $0 $0 $17,000 $29,250 $5,000 $2,550 $0 $2,451 $0 $16,935 $0 $0 $0 $0 233% $0.00 -$22,000 -$51,186.10 0% 0% $0.00"],
    ["TMR03", marlin, "Active", "$640 $4,490 $0 $0 $640 $4,490 $0 $0 $0 $0 $0 $0 $1,600 $0 $1,600 $1,600 702% $9,625.00 $960 $6,735.00 60% 421% $11,225.00"],
    ["TMR03", marlin, "Active", "$5,000 $10,340 $0 $0 $4,000 $9,300 $0 $0 $1,000 $1,040 $0 $0 $12,300 $0 $12,300 $16,824 207% $8,612.40 $7,300 $15,096.40 59% 123% $25,436.40"],
    ["TMR03", marlin, "Active", "$3,000 $1,860 $0 $0 $3,000 $1,860 $0 $0 $0 $0 $0 $0 $6,000 $0 $6,000 $4,000 62% -$280.00 $3,000 $1,860.00 50% 31% $3,720.00"]
];

const folds = { C: "fold", J: "unfold" };

document.getElementById("cols").innerHTML =
    `<col style="width: 23px">` + columns.map(c => `<col style="width: ${c[1]}px">`).join("");

document.getElementById("letters").innerHTML =
    `<th class="corner"></th>` + columns.map(c => `<th class="${folds[c[0]] || ""}">${c[0]}</th>`).join("");

document.getElementById("heads").innerHTML = `<th class="rh">4</th>` + columns.map(([, width, colour, name], i) => {
    const label = i < 3 ? name : `<span>${name}</span>`;
    const filter = name ? `<button class="filter" aria-label="Filter"></button>` : "";
    return `<th class="${colour} ${i < 3 ? "" : "up"}">${label}${filter}</th>`;
}).join("");

document.getElementById("rows").innerHTML = data.map(([project, description, status, values], i) => {
    const text = [project, description, status]
        .map(t => `<td class="text">${t.replace("&", "&amp;")}</td>`).join("");
    const numbers = values.split(" ").map(v => `<td>${v}</td>`).join("");
    return `<tr><th class="rh">${i + 5}</th>${text}${numbers}<td></td><td></td></tr>`;
}).join("");
```
